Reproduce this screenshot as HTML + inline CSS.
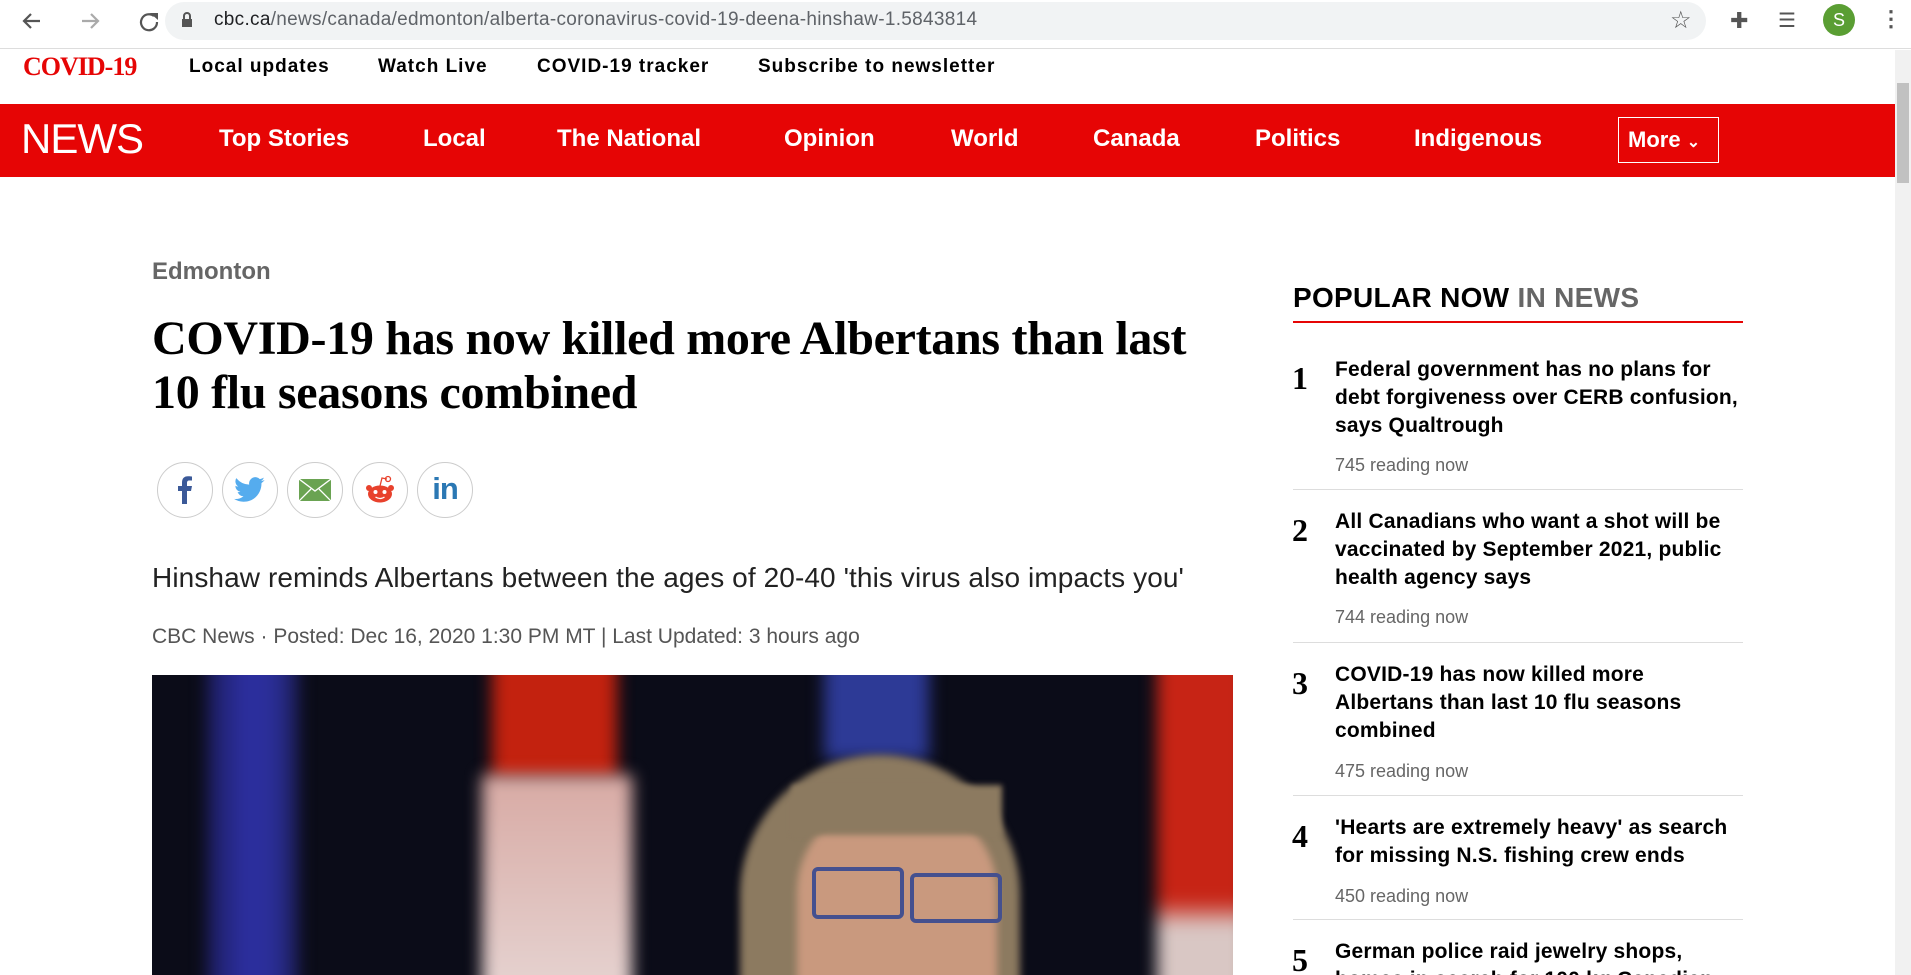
<!DOCTYPE html>
<html><head><meta charset="utf-8"><style>
*{margin:0;padding:0;box-sizing:border-box}
html,body{width:1911px;height:975px;overflow:hidden}
body{background:#fff;font-family:"Liberation Sans",sans-serif;position:relative;color:#000}
.a{position:absolute;white-space:nowrap}
.nav{font-weight:bold;font-size:24px;color:#fff;top:125px}
.top{font-weight:bold;font-size:19px;color:#000;top:56px;letter-spacing:1px}
.soc{position:absolute;top:462px;width:56px;height:56px;border:1px solid #ccc;border-radius:50%;display:flex;align-items:center;justify-content:center}
.pn{font-family:"Liberation Serif",serif;font-size:32px;font-weight:bold;left:1292px}
.pt{font-weight:bold;font-size:21px;line-height:28px;left:1335px;white-space:normal;width:410px;letter-spacing:.2px}
.pr{font-size:18px;color:#666;left:1335px}
.sep{position:absolute;left:1293px;width:450px;height:1px;background:#ddd}
.bl{position:absolute;filter:blur(8px)}
</style></head><body>
<div class="a" style="left:0;top:0;width:1911px;height:49px;background:#fff;border-bottom:1px solid #ddd"></div>
<svg class="a" style="left:18px;top:10px" width="150" height="30" viewBox="0 0 150 30"><path d="M22 11H6M13 4L6 11l7 7" stroke="#555" stroke-width="2.2" fill="none"/><path d="M64 11h16M73 4l7 7-7 7" stroke="#aaa" stroke-width="2.2" fill="none"/><path d="M136 6a8 8 0 1 0 3 6" stroke="#555" stroke-width="2.2" fill="none"/><path d="M132 3h8v7z" fill="#555"/></svg>
<div class="a" style="left:165px;top:2px;width:1541px;height:38px;background:#f1f3f4;border-radius:19px"></div>
<svg class="a" style="left:181px;top:12px" width="12" height="16"><rect x="1" y="7" width="10" height="8" fill="#555"/><path d="M3 7V4a3 3 0 0 1 6 0v3" stroke="#555" stroke-width="2" fill="none"/></svg>
<div class="a" style="left:214px;top:9px;font-size:19px;color:#202124;letter-spacing:.3px">cbc.ca<span style="color:#5f6368">/news/canada/edmonton/alberta-coronavirus-covid-19-deena-hinshaw-1.5843814</span></div>
<div class="a" style="left:1670px;top:6px;font-size:24px;color:#555">☆</div>
<div class="a" style="left:1730px;top:8px;font-size:22px;color:#555">✚</div>
<div class="a" style="left:1778px;top:8px;font-size:20px;color:#555">☰</div>
<div class="a" style="left:1823px;top:4px;width:32px;height:32px;border-radius:50%;background:#5a9e33;color:#fff;font-size:18px;text-align:center;line-height:32px">S</div>
<div class="a" style="left:1880px;top:6px;font-size:22px;color:#555;font-weight:bold">⋮</div>
<div class="a" style="left:1895px;top:50px;width:16px;height:925px;background:#f1f1f1"></div>
<div class="a" style="left:1897px;top:83px;width:12px;height:100px;background:#c1c1c1"></div>
<div class="a" style="left:23px;top:52px;font-family:'Liberation Serif',serif;font-weight:bold;font-size:26px;color:#e60505;letter-spacing:-1px">COVID-19</div>
<div class="a top" style="left:189px">Local updates</div>
<div class="a top" style="left:378px">Watch Live</div>
<div class="a top" style="left:537px">COVID-19 tracker</div>
<div class="a top" style="left:758px">Subscribe to newsletter</div>
<div class="a" style="left:0;top:104px;width:1895px;height:73px;background:#e60505"></div>
<div class="a" style="left:21px;top:115px;font-size:42px;color:#fff;letter-spacing:-1px">NEWS</div>
<div class="a nav" style="left:219px">Top Stories</div>
<div class="a nav" style="left:423px">Local</div>
<div class="a nav" style="left:557px">The National</div>
<div class="a nav" style="left:784px">Opinion</div>
<div class="a nav" style="left:951px">World</div>
<div class="a nav" style="left:1093px">Canada</div>
<div class="a nav" style="left:1255px">Politics</div>
<div class="a nav" style="left:1414px">Indigenous</div>
<div class="a" style="left:1618px;top:117px;width:101px;height:46px;border:1px solid #fff"></div>
<div class="a nav" style="left:1628px;font-size:22px;top:127px">More <span style="font-size:16px">⌄</span></div>
<div class="a" style="left:152px;top:258px;font-size:24px;font-weight:bold;color:#666">Edmonton</div>
<div class="a" style="left:152px;top:312px;font-family:'Liberation Serif',serif;font-weight:bold;font-size:48px;line-height:54px;letter-spacing:-0.3px">COVID-19 has now killed more Albertans than last<br>10 flu seasons combined</div>
<div class="soc" style="left:157px"><svg width="24" height="32" viewBox="0 0 24 32"><path d="M14 30V17h4l1-5h-5V9c0-1.5.5-2.5 2.5-2.5H19V2.5c-.5 0-2-.3-4-.3-4 0-6 2.3-6 6.3V12H5v5h4v13z" fill="#3b5998"/></svg></div>
<div class="soc" style="left:222px"><svg width="32" height="28" viewBox="0 0 24 20"><path d="M23 2.5a9 9 0 0 1-2.7.8A4.7 4.7 0 0 0 22.4.7a9.4 9.4 0 0 1-3 1.1A4.7 4.7 0 0 0 11.4 6 13.3 13.3 0 0 1 1.7 1.1a4.7 4.7 0 0 0 1.5 6.3A4.7 4.7 0 0 1 1 6.8a4.7 4.7 0 0 0 3.8 4.6 4.7 4.7 0 0 1-2.1.1 4.7 4.7 0 0 0 4.4 3.2A9.4 9.4 0 0 1 0 16.7 13.3 13.3 0 0 0 7.2 18.8c8.7 0 13.4-7.2 13.4-13.4v-.6A9.5 9.5 0 0 0 23 2.5z" fill="#55acee"/></svg></div>
<div class="soc" style="left:287px"><svg width="32" height="22" viewBox="0 0 32 22"><rect width="32" height="22" fill="#6aa352"/><path d="M0 0l16 12L32 0M0 22l12-12M32 22L20 10" stroke="#fff" stroke-width="1.3" fill="none"/></svg></div>
<div class="soc" style="left:352px"><svg width="32" height="30" viewBox="0 0 32 30"><ellipse cx="16" cy="19" rx="12" ry="8.5" fill="#e8412c"/><circle cx="5" cy="13" r="3" fill="#e8412c"/><circle cx="27" cy="13" r="3" fill="#e8412c"/><circle cx="24" cy="4" r="2.5" fill="none" stroke="#e8412c" stroke-width="1.3"/><path d="M16 11l2-8 5 1" stroke="#e8412c" stroke-width="1.3" fill="none"/><circle cx="11.5" cy="17" r="2" fill="#fff"/><circle cx="20.5" cy="17" r="2" fill="#fff"/><path d="M11.5 22q4.5 3 9 0" stroke="#fff" stroke-width="1.3" fill="none"/></svg></div>
<div class="soc" style="left:417px"><div style="font-weight:bold;font-size:31px;color:#2b78b4;letter-spacing:-1px;margin-top:-3px">in</div></div>
<div class="a" style="left:152px;top:562px;font-size:28px;color:#222;letter-spacing:.1px">Hinshaw reminds Albertans between the ages of 20-40 'this virus also impacts you'</div>
<div class="a" style="left:152px;top:625px;font-size:21px;color:#555;letter-spacing:0">CBC News · Posted: Dec 16, 2020 1:30 PM MT | Last Updated: 3 hours ago</div>
<div class="a" style="left:152px;top:675px;width:1081px;height:300px;background:#0b0c18;overflow:hidden">
 <div class="bl" style="left:55px;top:-20px;width:92px;height:340px;background:linear-gradient(90deg,#1c1d5e,#2c2e9e 40%,#2b2f9a 70%,#1d1e58)"></div>
 <div class="bl" style="left:340px;top:-20px;width:125px;height:125px;background:#c3220f"></div>
 <div class="bl" style="left:330px;top:100px;width:150px;height:220px;background:linear-gradient(#d8aaa4,#e6d4d2)"></div>
 <div class="bl" style="left:672px;top:-20px;width:105px;height:105px;background:#2d3a96"></div>
 <div class="bl" style="left:1005px;top:-20px;width:90px;height:340px;background:linear-gradient(#c72415 0 72%,#d9c7c4 80%)"></div>
 <div style="position:absolute;left:588px;top:80px;width:280px;height:260px;border-radius:140px 140px 0 0;background:#8c7a60;filter:blur(4px)"></div>
 <div style="position:absolute;left:645px;top:127px;width:200px;height:200px;border-radius:90px 90px 0 0;background:#c9997e;filter:blur(4px)"></div>
 <div style="position:absolute;left:640px;top:110px;width:210px;height:50px;background:#8c7a60;filter:blur(3px)"></div>
 <div style="position:absolute;left:660px;top:192px;width:92px;height:52px;border:4px solid #44508f;border-radius:6px"></div>
 <div style="position:absolute;left:758px;top:198px;width:92px;height:50px;border:4px solid #44508f;border-radius:6px"></div>
</div>
<div class="a" style="left:1293px;top:282px;font-size:28px;font-weight:bold;letter-spacing:.3px">POPULAR NOW <span style="color:#666">IN NEWS</span></div>
<div class="a" style="left:1293px;top:321px;width:450px;height:2px;background:#e60505"></div>
<div class="a pn" style="top:360px">1</div>
<div class="a pt" style="top:356px">Federal government has no plans for debt forgiveness over CERB confusion, says Qualtrough</div>
<div class="a pr" style="top:455px">745 reading now</div>
<div class="sep" style="top:489px"></div>
<div class="a pn" style="top:512px">2</div>
<div class="a pt" style="top:508px">All Canadians who want a shot will be vaccinated by September 2021, public health agency says</div>
<div class="a pr" style="top:607px">744 reading now</div>
<div class="sep" style="top:642px"></div>
<div class="a pn" style="top:665px">3</div>
<div class="a pt" style="top:661px">COVID-19 has now killed more Albertans than last 10 flu seasons combined</div>
<div class="a pr" style="top:761px">475 reading now</div>
<div class="sep" style="top:795px"></div>
<div class="a pn" style="top:818px">4</div>
<div class="a pt" style="top:814px">'Hearts are extremely heavy' as search for missing N.S. fishing crew ends</div>
<div class="a pr" style="top:886px">450 reading now</div>
<div class="sep" style="top:919px"></div>
<div class="a pn" style="top:942px">5</div>
<div class="a pt" style="top:938px;height:37px;overflow:hidden">German police raid jewelry shops, homes in search for 100 kg Canadian</div>
</body></html>
